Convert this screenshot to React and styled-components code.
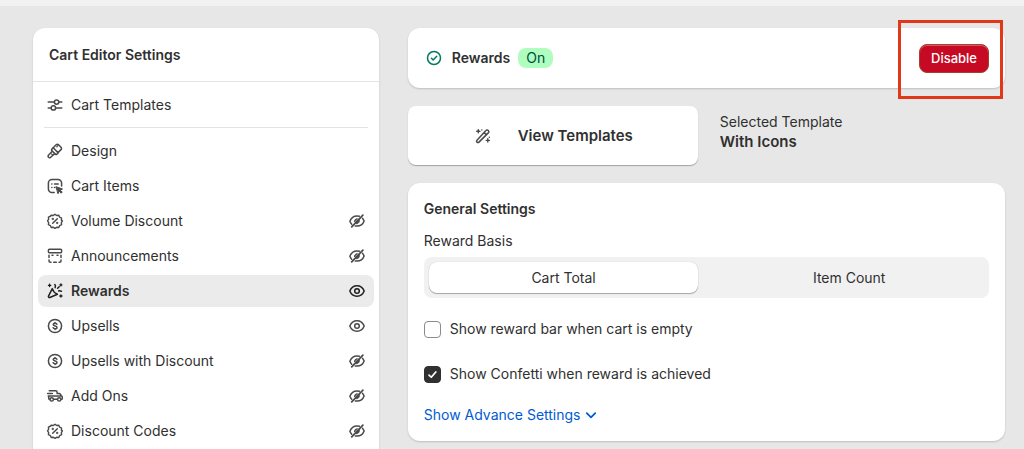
import React, { useState } from "react";
import styled, { createGlobalStyle } from "styled-components";

const GlobalStyle = createGlobalStyle`
  * {
    box-sizing: border-box;
  }
  body {
    margin: 0;
    background: #e7e7e7;
    color: #303030;
    font-family: Inter, "Liberation Sans", sans-serif;
    font-size: 14px;
    line-height: 20px;
  }
  button, input {
    font: inherit;
  }
`;

const Svg = styled.svg`
  flex: none;
  width: 20px;
  height: 20px;
  fill: none;
  stroke: ${(props) => props.$color || "#4a4a4a"};
  stroke-width: ${(props) => props.$weight || 1.5};
  stroke-linecap: round;
  stroke-linejoin: round;
`;

const Icon = ({ name, color, weight }) => (
  <Svg viewBox="0 0 20 20" $color={color} $weight={weight} aria-hidden="true">
    {icons[name]}
  </Svg>
);

const icons = {
  sliders: (
    <>
      <path d="M3.2 7.1h5.9M14 7.1h2.8M3.2 12.9H6M10.900 12.900h5.900" />
      <circle cx="11.6" cy="7.1" r="2.2" />
      <circle cx="8.4" cy="12.9" r="2.2" />
    </>
  ),
  brush: (
    <>
      <path d="m8.200 6.800 3-3c.7-.7 1.700-.7 2.400 0l2.400 2.400c.7.7.7 1.700 0 2.400l-3 3z" />
      <path d="M8.200 6.800 6.900 8.100c-.5.5-.5 1.100 0 1.600l3.400 3.400c.5.5 1.100.5 1.600 0L13.200 11.800" />
      <path d="m7.300 10.200-3.700 3.900c-.7.700-.7 1.600-.1 2.200s1.500.6 2.200-.1l4-3.600" />
      <path d="m6.500 12.900 1 1M13 4.300l-1.200 1.600" strokeWidth="1.200" />
    </>
  ),
  cartItems: (
    <>
      <path d="M9.2 16.600H7a3.600 3.600 0 0 1-3.600-3.600V7A3.600 3.600 0 0 1 7 3.400h6A3.600 3.600 0 0 1 16.600 7v3" />
      <path d="M6.800 8h.1M6.800 11.500h.1M9.500 8h3.700M9.500 11.500h.4" />
      <path
        d="m11.300 10.800 6.200 2.200-2.300 1.100 2 2-1.100 1.100-2-2-1 2.200z"
        fill="#4a4a4a"
        strokeWidth="1"
      />
    </>
  ),
  discount: (
    <>
      <path d="M8.200 4.200 10 2.800l1.800 1.400 2.300-.3.900 2.100 2.100.9-.3 2.300L18 10l-1.200 1.800.3 2.300-2.100.9-.9 2.100-2.300-.3L10 18l-1.800-1.200-2.300.3-.9-2.100-2.100-.9.300-2.300L2 10l1.200-1.800-.3-2.300L5 5l.9-1.100z" transform="translate(.7 .6) scale(.93)" />
      <path d="m7.700 12.300 4.600-4.600" />
      <circle cx="7.800" cy="8" r=".4" />
      <circle cx="12.200" cy="12" r=".4" />
    </>
  ),
  announcement: (
    <>
      <rect x="3.400" y="3.300" width="13.200" height="3.500" rx="1" />
      <path d="M4 9.300v2.100M16 9.300v2.100M4 14v.9c0 .9.500 1.400 1.400 1.400H6M8.700 16.300h2.600M14 16.300h.6c.9 0 1.400-.5 1.400-1.400V14M7 9.300h1M12 9.300h1" />
    </>
  ),
  confetti: (
    <>
      <path d="m7.300 7.600-3.800 7.500c-.4.900.5 1.800 1.400 1.400l7.500-3.200c-2.200-1-4.300-3-5.100-5.700Z" />
      <path d="M9.800 3.600c.8.900.9 1.900.3 3M12.600 7.300l1.600-1.500M13.600 10c.9-.5 1.900-.4 2.800.3" />
      <path
        d="M4.600 3.300v2.200M3.500 4.400h2.200M15.900 2.900v2M14.900 3.900h2M15.900 13.900v2.200M14.800 15h2.200"
        strokeWidth="1.400"
      />
    </>
  ),
  dollar: (
    <>
      <circle cx="10" cy="10" r="6.600" />
      <path d="M11.900 8.300c-.3-.7-1-1-1.900-1-1 0-1.800.5-1.800 1.300 0 1.900 3.800.9 3.800 2.800 0 .8-.9 1.300-2 1.300-.9 0-1.600-.4-1.900-1M10 6.400v.8M10 12.800v.8" />
    </>
  ),
  delivery: (
    <>
      <path d="M4.300 4.800h6.400c.9 0 1.400.500 1.400 1.400v1.200M8.600 13.300h3.700M12.100 7.400h2c.7 0 1 .2 1.300.8l.8 1.500c.7.2 1.100.7 1.100 1.500v1.300c0 .5-.4.8-.8.8M12.200 10h3.800M2.600 7.400h4.700M3.200 10h9M3.700 10.200v2.200c0 .6.4.9 1 .9" />
      <circle cx="6.700" cy="13.400" r="1.700" />
      <circle cx="14.200" cy="13.400" r="1.700" />
    </>
  ),
  eye: (
    <>
      <path d="M2.800 10c1.200-3 3.900-5.200 7.200-5.200s6 2.200 7.200 5.200c-1.200 3-3.900 5.200-7.200 5.200S4 13 2.800 10Z" />
      <circle cx="10" cy="10" r="2.300" />
    </>
  ),
  eyeOff: (
    <>
      <path d="M4.700 13.200C3.900 12.400 3.300 11.400 2.900 10.200 4 7.200 6.700 4.900 10 4.900c.9 0 1.700.1 2.400.4M15.500 7.200c.7.800 1.200 1.700 1.600 2.800-1.100 3.100-3.800 5.100-7.100 5.100-.6 0-1.200-.1-1.800-.2" />
      <path d="M15.900 4.100 4.700 15.900" strokeWidth="1.700" />
      <path
        d="m12.300 8.800-3.600 3.700c2 .8 4.200-1 3.600-3.700ZM7.500 10.600c-.2-1.600 1-2.900 2.600-2.900z"
        fill="#4a4a4a"
        strokeWidth="1"
      />
    </>
  ),
  check: (
    <>
      <circle cx="10" cy="10" r="6.500" />
      <path d="m7.400 10.200 1.800 1.700 3.500-3.600" />
    </>
  ),
  wand: (
    <>
      <path d="m4 14.200 8.900-9.600c.7-.8 1.700-.8 2.400-.1s.7 1.700 0 2.400l-9.300 9.200c-.6.6-1.400.6-2 0s-.6-1.300 0-1.900ZM11.200 6.600l2.200 2.200" />
      <path
        d="M5.300 3.600v3.200M3.700 5.200h3.200M14.800 12.800V16M13.200 14.400h3.200M8.800 3.900h.1M16.300 11.200h.1"
        strokeWidth="1.400"
      />
    </>
  ),
  chevron: <path d="m5.800 8.200 4.200 4.100 4.200-4.100" />,
};

const TopBar = styled.header`
  height: 6px;
  background: #f2f2f2;
`;

const Page = styled.div`
  height: 100vh;
  overflow: hidden;
`;

const Layout = styled.div`
  display: grid;
  grid-template-columns: 11fr 19fr;
  gap: 29px;
  align-items: start;
  padding: 22px 19px 0 33px;
`;

const Card = styled.section`
  background: #fff;
  border-radius: 12px;
  box-shadow: 0 1px 2px rgba(0, 0, 0, 0.18);
`;

const CardTitle = styled.h2`
  margin: 0;
  font-size: ${(props) => (props.$large ? 15 : 14)}px;
  font-weight: 600;
`;

const SidebarHeader = styled.div`
  padding: 17px 16px 16px;
  border-bottom: 1px solid #e3e3e3;
`;

const Nav = styled.nav`
  display: flex;
  flex-direction: column;
  gap: 3px;
  padding: 7px 5px 24px;
`;

const NavDivider = styled.hr`
  width: calc(100% - 12px);
  height: 1px;
  margin: 3px 6px 4px;
  border: 0;
  background: #e3e3e3;
`;

const NavLink = styled.a`
  display: flex;
  align-items: center;
  gap: 6px;
  height: 32px;
  padding: 0 7px;
  border-radius: 8px;
  color: #303030;
  text-decoration: none;
  font-weight: ${(props) => (props.$active ? 600 : 400)};
  background: ${(props) => (props.$active ? "#ebebeb" : "transparent")};
`;

const NavLabel = styled.span`
  flex: 1;
`;

const Main = styled.main`
  display: flex;
  flex-direction: column;
  gap: 18px;
`;

const StatusCard = styled(Card)`
  display: flex;
  align-items: center;
  justify-content: space-between;
  height: 60px;
  padding: 0 16px;
`;

const Status = styled.div`
  display: flex;
  align-items: center;
  gap: 8px;
`;

const Badge = styled.span`
  padding: 0 8px;
  border-radius: 8px;
  background: #affebf;
  color: #014b40;
`;

const Highlight = styled.div`
  position: relative;
  &:after {
    content: "";
    position: absolute;
    inset: -24px -14px -26px -21px;
    border: 3px solid #e2381a;
    pointer-events: none;
  }
`;

const DangerButton = styled.button`
  display: block;
  height: 29px;
  padding: 0 11px;
  border: 1px solid #a3402f;
  border-radius: 8px;
  background: #c70a24;
  box-shadow: inset 0 1px 0 #dc5566;
  color: #fff;
  font-size: 13px;
  font-weight: 500;
`;

const TemplateRow = styled.div`
  display: flex;
  gap: 22px;
`;

const TemplateButton = styled.button`
  display: flex;
  flex: 0 1 290px;
  align-items: center;
  justify-content: center;
  gap: 25px;
  height: 59px;
  border: 0;
  border-radius: 8px;
  background: #fff;
  box-shadow: 0 1px 1px rgba(0, 0, 0, 0.3);
  color: #303030;
  font-size: 15px;
  font-weight: 600;
`;

const SelectedTemplate = styled.div`
  display: flex;
  flex-direction: column;
  padding-top: 6px;
`;

const SettingsCard = styled(Card)`
  padding: 16px;
`;

const Fieldset = styled.fieldset`
  min-width: 0;
  margin: 12px 0 0;
  padding: 0;
  border: 0;
`;

const Legend = styled.legend`
  margin-bottom: 6px;
  padding: 0;
`;

const Segments = styled.div`
  display: grid;
  grid-template-columns: 1fr 1fr;
  gap: 16px;
  height: 41px;
  padding: 5px;
  border-radius: 8px;
  background: #f1f1f1;
`;

const Segment = styled.label`
  position: relative;
  display: flex;
  align-items: center;
  justify-content: center;
  border-radius: 8px;
  background: ${(props) => (props.$checked ? "#fff" : "transparent")};
  box-shadow: ${(props) =>
    props.$checked ? "0 1px 1px rgba(0, 0, 0, 0.3), 0 0 1px rgba(0, 0, 0, 0.2)" : "none"};
`;

const SegmentInput = styled.input`
  position: absolute;
  inset: 0;
  width: 100%;
  height: 100%;
  margin: 0;
  opacity: 0;
`;

const Options = styled.div`
  display: flex;
  flex-direction: column;
  gap: 25px;
  margin: 21px 0;
`;

const CheckLabel = styled.label`
  display: flex;
  align-items: center;
  gap: 9px;
`;

const CheckBox = styled.span`
  position: relative;
  width: 17px;
  height: 17px;
`;

const CheckInput = styled.input`
  appearance: none;
  display: block;
  width: 17px;
  height: 17px;
  margin: 0;
  border: 1px solid #8a8a8a;
  border-radius: 4px;
  background: #fff;
  &:checked {
    border-color: #303030;
    background: #303030;
  }
`;

const Tick = styled.svg`
  position: absolute;
  inset: 0;
  fill: none;
  stroke: #fff;
  stroke-width: 1.8;
  stroke-linecap: round;
  stroke-linejoin: round;
  pointer-events: none;
`;

const LinkButton = styled.button`
  display: flex;
  align-items: center;
  gap: 0;
  padding: 0;
  border: 0;
  background: none;
  color: #005bd3;
`;

const navItems = [
  { label: "Design", icon: "brush" },
  { label: "Cart Items", icon: "cartItems" },
  { label: "Volume Discount", icon: "discount", visible: false },
  { label: "Announcements", icon: "announcement", visible: false },
  { label: "Rewards", icon: "confetti", visible: true, active: true },
  { label: "Upsells", icon: "dollar", visible: true },
  { label: "Upsells with Discount", icon: "dollar", visible: false },
  { label: "Add Ons", icon: "delivery", visible: false },
  { label: "Discount Codes", icon: "discount", visible: false },
];

const NavItem = ({ label, icon, visible, active }) => {
  const color = active ? "#1f1f1f" : "#4a4a4a";
  return (
    <NavLink href="#" $active={active} aria-current={active ? "page" : undefined}>
      <Icon name={icon} color={color} />
      <NavLabel>{label}</NavLabel>
      {visible !== undefined && (
        <Icon name={visible ? "eye" : "eyeOff"} color={color} />
      )}
    </NavLink>
  );
};

const Checkbox = ({ label, defaultChecked }) => {
  const [checked, setChecked] = useState(defaultChecked);
  return (
    <CheckLabel>
      <CheckBox>
        <CheckInput
          type="checkbox"
          checked={checked}
          onChange={(e) => setChecked(e.target.checked)}
        />
        {checked && (
          <Tick viewBox="0 0 18 18">
            <path d="m5.300 9.600 2.400 2.300 4.800-5.600" />
          </Tick>
        )}
      </CheckBox>
      {label}
    </CheckLabel>
  );
};

export default function App() {
  const [basis, setBasis] = useState("Cart Total");

  return (
    <Page>
      <GlobalStyle />
      <TopBar />
      <Layout>
        <Card>
          <SidebarHeader>
            <CardTitle>Cart Editor Settings</CardTitle>
          </SidebarHeader>
          <Nav>
            <NavItem label="Cart Templates" icon="sliders" />
            <NavDivider />
            {navItems.map((item) => (
              <NavItem key={item.label} {...item} />
            ))}
          </Nav>
        </Card>

        <Main>
          <StatusCard>
            <Status>
              <Icon name="check" color="#047b5d" />
              <CardTitle>Rewards</CardTitle>
              <Badge>On</Badge>
            </Status>
            <Highlight>
              <DangerButton type="button">Disable</DangerButton>
            </Highlight>
          </StatusCard>

          <TemplateRow>
            <TemplateButton type="button">
              <Icon name="wand" />
              View Templates
            </TemplateButton>
            <SelectedTemplate>
              <span>Selected Template</span>
              <CardTitle $large>With Icons</CardTitle>
            </SelectedTemplate>
          </TemplateRow>

          <SettingsCard>
            <CardTitle>General Settings</CardTitle>
            <Fieldset>
              <Legend>Reward Basis</Legend>
              <Segments>
                {["Cart Total", "Item Count"].map((option) => (
                  <Segment key={option} $checked={basis === option}>
                    <SegmentInput
                      type="radio"
                      name="basis"
                      checked={basis === option}
                      onChange={() => setBasis(option)}
                    />
                    {option}
                  </Segment>
                ))}
              </Segments>
            </Fieldset>
            <Options>
              <Checkbox label="Show reward bar when cart is empty" defaultChecked={false} />
              <Checkbox label="Show Confetti when reward is achieved" defaultChecked />
            </Options>
            <LinkButton type="button">
              Show Advance Settings
              <Icon name="chevron" color="#005bd3" weight={1.8} />
            </LinkButton>
          </SettingsCard>
        </Main>
      </Layout>
    </Page>
  );
}
